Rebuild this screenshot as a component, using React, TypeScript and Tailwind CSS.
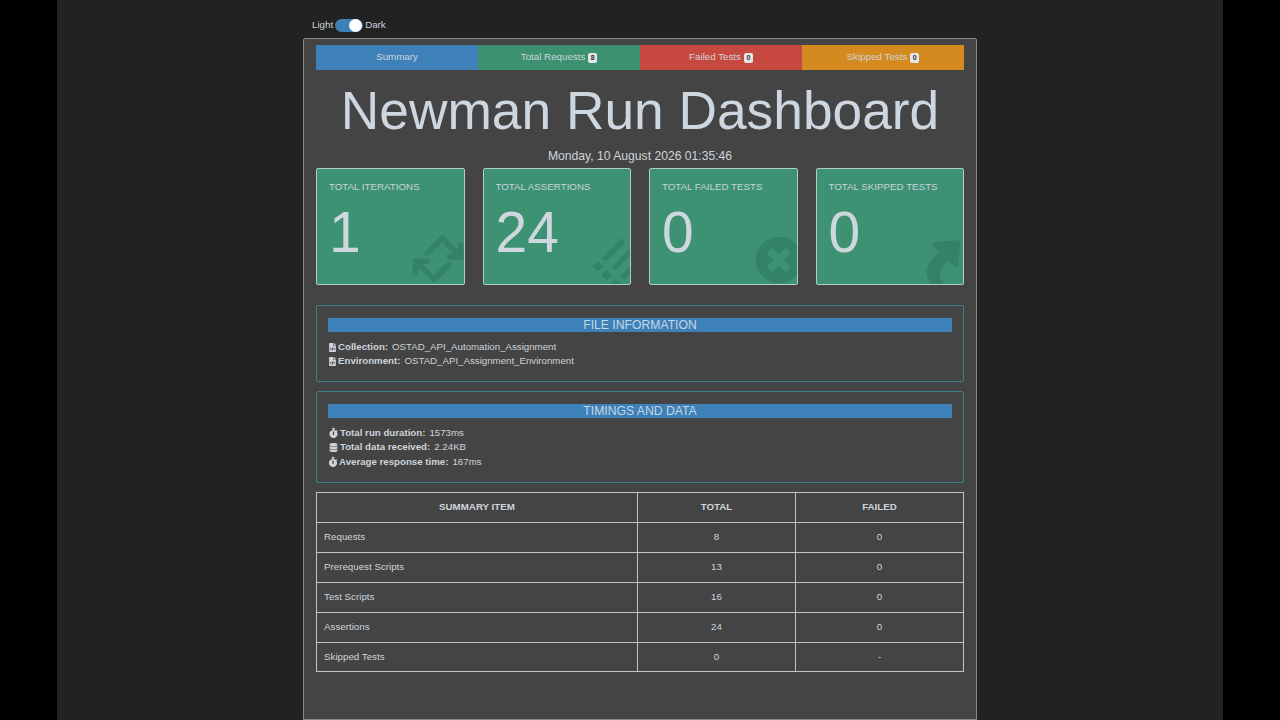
import { FaRetweet, FaList, FaTimesCircle, FaShare, FaFileCode, FaStopwatch, FaDatabase } from "react-icons/fa";
import type { ReactNode } from "react";

const NAV = [
  { label: "Summary", bg: "bg-[#3e80b8]" },
  { label: "Total Requests", badge: "8", bg: "bg-[#3b9170]" },
  { label: "Failed Tests", badge: "0", bg: "bg-[#c7483f]" },
  { label: "Skipped Tests", badge: "0", bg: "bg-[#d58a20]" },
];

const ROWS = [
  ["Requests", "8", "0"],
  ["Prerequest Scripts", "13", "0"],
  ["Test Scripts", "16", "0"],
  ["Assertions", "24", "0"],
  ["Skipped Tests", "0", "-"],
];

function StatCard({ title, value, icon }: { title: string; value: string; icon: ReactNode }) {
  return (
    <div className="relative h-[117px] overflow-hidden rounded-[2px] border border-[#aecfc2] bg-[#3c9272] px-3 pt-[11px]">
      <div className="text-[9.75px] leading-[14px] text-[#c9d3da]">{title}</div>
      <div className="mt-[6px] text-[57px] leading-[64px] text-[#ced6de]">{value}</div>
      {icon}
    </div>
  );
}

function InfoBox({ title, className, children }: { title: string; className: string; children: ReactNode }) {
  return (
    <section className={`rounded-[2px] border border-[#3d7f86] px-[11px] pt-3 ${className}`}>
      <h2 className="h-[14px] bg-[#3e80b8] text-center text-[12.2px] leading-[14px] text-[#c4d6e6]">{title}</h2>
      <div className="mt-[8px]">{children}</div>
    </section>
  );
}

function InfoLine({ icon, label, value }: { icon: ReactNode; label: string; value: string }) {
  return (
    <div className="flex h-[14.5px] items-center gap-[1px] text-[9.7px] text-[#ced4da]">
      {icon}
      <b className="mr-[3px] font-bold">{label}</b>
      {value}
    </div>
  );
}

export default function App() {
  return (
    <div className="flex h-[720px] overflow-hidden bg-black font-['Liberation_Sans',Arial,sans-serif]">
      <div className="mx-[57px] flex flex-1 justify-center bg-[#222222]">
        <div className="w-[674px]">
          <div className="flex h-[38px] items-center pl-[9px] pt-[12px] text-[9.75px] text-[#ced4da]">
            <span>Light</span>
            <span className="relative mx-[2px] h-[13px] w-[28px] rounded-full bg-[#3e80b8]">
              <span className="absolute right-[1px] top-0 h-[13px] w-[13px] rounded-full bg-white" />
            </span>
            <span>Dark</span>
          </div>

          <main className="h-[682px] rounded-t-[2px] border border-[#8a8a8a] bg-[#444444] px-3 pt-[6px]">
            <nav className="grid h-[25px] grid-cols-4">
              {NAV.map((item) => (
                <div key={item.label} className={`flex items-center justify-center text-[9.75px] text-[#ced4da] ${item.bg}`}>
                  {item.label}
                  {item.badge && (
                    <span className="ml-[3px] rounded-[2px] bg-[#e4e7ea] px-[2.5px] text-[7px] font-bold leading-[10px] text-[#333333]">
                      {item.badge}
                    </span>
                  )}
                </div>
              ))}
            </nav>

            <h1 className="mt-[11px] text-center text-[53.3px] leading-[60px] text-[#ced6e0]">Newman Run Dashboard</h1>
            <p className="mt-[7px] text-center text-[12.15px] leading-[16px] text-[#ced4da]">Monday, 10 August 2026 01:35:46</p>

            <div className="mt-[4px] grid grid-cols-4 gap-[18px]">
              <StatCard
                title="TOTAL ITERATIONS"
                value="1"
                icon={<FaRetweet className="absolute left-[92px] top-[61px] h-[58px] w-[58px] -rotate-45 text-[#348268]" />}
              />
              <StatCard
                title="TOTAL ASSERTIONS"
                value="24"
                icon={<FaList className="absolute left-[114px] top-[74px] h-[41px] w-[41px] -rotate-45 text-[#348268]" />}
              />
              <StatCard
                title="TOTAL FAILED TESTS"
                value="0"
                icon={<FaTimesCircle className="absolute left-[105px] top-[67px] h-[48px] w-[48px] text-[#348268]" />}
              />
              <StatCard
                title="TOTAL SKIPPED TESTS"
                value="0"
                icon={<FaShare className="absolute left-[103px] top-[68px] h-[50px] w-[50px] -rotate-45 text-[#348268]" />}
              />
            </div>

            <InfoBox title="FILE INFORMATION" className="mt-[20px] h-[77px]">
              <InfoLine icon={<FaFileCode className="h-[9px] w-[9px]" />} label="Collection:" value="OSTAD_API_Automation_Assignment" />
              <InfoLine icon={<FaFileCode className="h-[9px] w-[9px]" />} label="Environment:" value="OSTAD_API_Assignment_Environment" />
            </InfoBox>

            <InfoBox title="TIMINGS AND DATA" className="mt-[9px] h-[92px]">
              <InfoLine icon={<FaStopwatch className="h-[10px] w-[11px]" />} label="Total run duration:" value="1573ms" />
              <InfoLine icon={<FaDatabase className="h-[9px] w-[11px]" />} label="Total data received:" value="2.24KB" />
              <InfoLine icon={<FaStopwatch className="h-[10px] w-[10px]" />} label="Average response time:" value="167ms" />
            </InfoBox>

            <table className="mt-[9px] w-full table-fixed border-collapse text-[9.75px] text-[#ced4da]">
              <colgroup>
                <col className="w-[321px]" />
                <col className="w-[158px]" />
                <col />
              </colgroup>
              <thead>
                <tr className="h-[30px]">
                  <th className="border border-[#c4c4c4] font-bold">SUMMARY ITEM</th>
                  <th className="border border-[#c4c4c4] font-bold">TOTAL</th>
                  <th className="border border-[#c4c4c4] font-bold">FAILED</th>
                </tr>
              </thead>
              <tbody>
                {ROWS.map(([name, total, failed], i) => (
                  <tr key={name} className={i === ROWS.length - 1 ? "h-[29px]" : "h-[30px]"}>
                    <td className="border border-[#c4c4c4] px-[7px]">{name}</td>
                    <td className="border border-[#c4c4c4] text-center">{total}</td>
                    <td className="border border-[#c4c4c4] text-center">{failed}</td>
                  </tr>
                ))}
              </tbody>
            </table>
          </main>
        </div>
      </div>
    </div>
  );
}
